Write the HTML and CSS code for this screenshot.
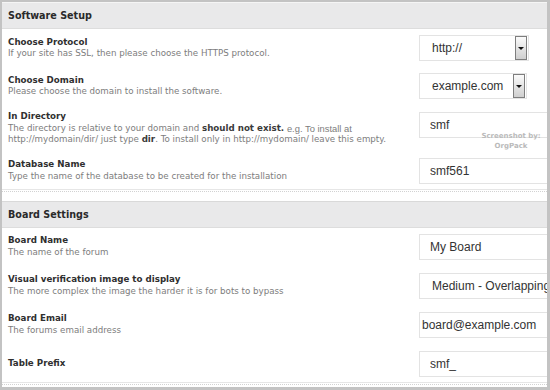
FILE: index.html
```html
<!DOCTYPE html>
<html lang="en">
  <head>
    <meta charset="UTF-8" />
    <title>Software Setup</title>
    <link rel="stylesheet" href="styles.css">
  </head>
  <body>
    <div class="frame">
      <div class="section">
        <div class="section-head">Software Setup</div>
        <div class="section-body">
          <div class="row">
            <div class="label">
              <div class="title">Choose Protocol</div>
              <div class="desc">If your site has SSL, then please choose the HTTPS protocol.</div>
            </div>
            <div class="select">
              <span class="select-text">http://</span>
              <span class="select-btn"></span>
            </div>
          </div>
          <div class="row">
            <div class="label">
              <div class="title">Choose Domain</div>
              <div class="desc">Please choose the domain to install the software.</div>
            </div>
            <div class="select select-small">
              <span class="select-text">example.com</span>
              <span class="select-btn"></span>
            </div>
          </div>
          <div class="row row-top">
            <div class="label">
              <div class="title">In Directory</div>
              <div class="desc">The directory is relative to your domain and <b>should not exist.</b> <span class="note">e.g. To install at</span><br>http://mydomain/dir/ just type <b>dir</b>. To install only in http://mydomain/ leave this empty.</div>
            </div>
            <input class="field" type="text" value="smf">
          </div>
          <div class="row">
            <div class="label">
              <div class="title">Database Name</div>
              <div class="desc">Type the name of the database to be created for the installation</div>
            </div>
            <input class="field" type="text" value="smf561">
          </div>
        </div>
      </div>

      <div class="section">
        <div class="section-head">Board Settings</div>
        <div class="section-body section-body-loose">
          <div class="row">
            <div class="label">
              <div class="title">Board Name</div>
              <div class="desc">The name of the forum</div>
            </div>
            <input class="field" type="text" value="My Board">
          </div>
          <div class="row">
            <div class="label">
              <div class="title">Visual verification image to display</div>
              <div class="desc">The more complex the image the harder it is for bots to bypass</div>
            </div>
            <div class="select select-wide">
              <span class="select-text">Medium - Overlapping</span>
              <span class="select-btn"></span>
            </div>
          </div>
          <div class="row">
            <div class="label">
              <div class="title">Board Email</div>
              <div class="desc">The forums email address</div>
            </div>
            <input class="field field-tight" type="text" value="board@example.com">
          </div>
          <div class="row">
            <div class="label">
              <div class="title">Table Prefix</div>
            </div>
            <input class="field" type="text" value="smf_">
          </div>
        </div>
      </div>

      <div class="watermark">Screenshot by:<br>OrgPack</div>
    </div>
  </body>
</html>
```

FILE: styles.css
```css
* {
  margin: 0;
  box-sizing: border-box;
}

body {
  background-color: #c3c3c3;
  padding: 2px 3px 3px 2px;
  height: 390px;
  overflow: hidden;
  font-family: "DejaVu Sans", Verdana, sans-serif;
}

.frame {
  position: relative;
  background-color: #fff;
  height: 385px;
  overflow: hidden;
}

.section {
  border-bottom: 1px dotted #d2d2d2;
  padding-bottom: 1px;
  margin-bottom: 9px;
}

.section-head {
  height: 27px;
  padding-left: 6px;
  background-color: #e9e9ea;
  border-top: 1px solid #d9d9d9;
  border-bottom: 1px solid #dddddd;
  font-size: 9.6px;
  font-weight: bold;
  line-height: 25px;
  color: #2a2a2a;
}

.section:first-child .section-head {
  border-top-color: #f5f5f5;
}

.section-body {
  display: flex;
  flex-direction: column;
  gap: 12px;
  padding: 6px 0 5px 6px;
  border-bottom: 1px solid #e6e6e6;
}

.section-body-loose {
  gap: 13px;
}

.row {
  display: grid;
  grid-template-columns: 411px 1fr;
  align-items: center;
}

.row-top {
  align-items: start;
}

.row-top .field {
  margin-top: 1px;
}

.label {
  font-size: 8.7px;
  line-height: 11.5px;
}

.title {
  font-weight: bold;
  color: #2f2f2f;
}

.desc {
  color: #7d7d7d;
}

.desc b {
  color: #3a3a3a;
}

.desc .note {
  font-family: "Liberation Sans", Arial, sans-serif;
  font-size: 9.4px;
  vertical-align: top;
}

.select,
.field {
  height: 26px;
  border: 1px solid #e3e3e3;
  background-color: #fff;
  font-family: "Liberation Sans", Arial, sans-serif;
  font-size: 12px;
  color: #333;
}

.select {
  display: flex;
  align-items: center;
  width: 110px;
  padding-left: 12px;
}

.select-small {
  width: 108px;
}

.select-wide {
  width: 200px;
}

.select-text {
  flex: 1;
  white-space: nowrap;
}

.select-btn {
  display: flex;
  align-items: center;
  justify-content: center;
  align-self: stretch;
  width: 12px;
  margin: 0 1px 0 4px;
  border: 1px solid #7e7e7e;
  background: linear-gradient(#fbfbfb, #cfcfcf);
}

.select-btn::after {
  content: "";
  border-left: 3px solid transparent;
  border-right: 3px solid transparent;
  border-top: 3px solid #111;
}

.field {
  width: 150px;
  padding: 0 10px;
  outline: none;
}

.field-tight {
  padding-left: 2px;
}

.watermark {
  position: absolute;
  left: 474px;
  top: 129px;
  width: 70px;
  text-align: center;
  font-size: 7px;
  font-weight: bold;
  line-height: 10px;
  color: #bababa;
}
```
